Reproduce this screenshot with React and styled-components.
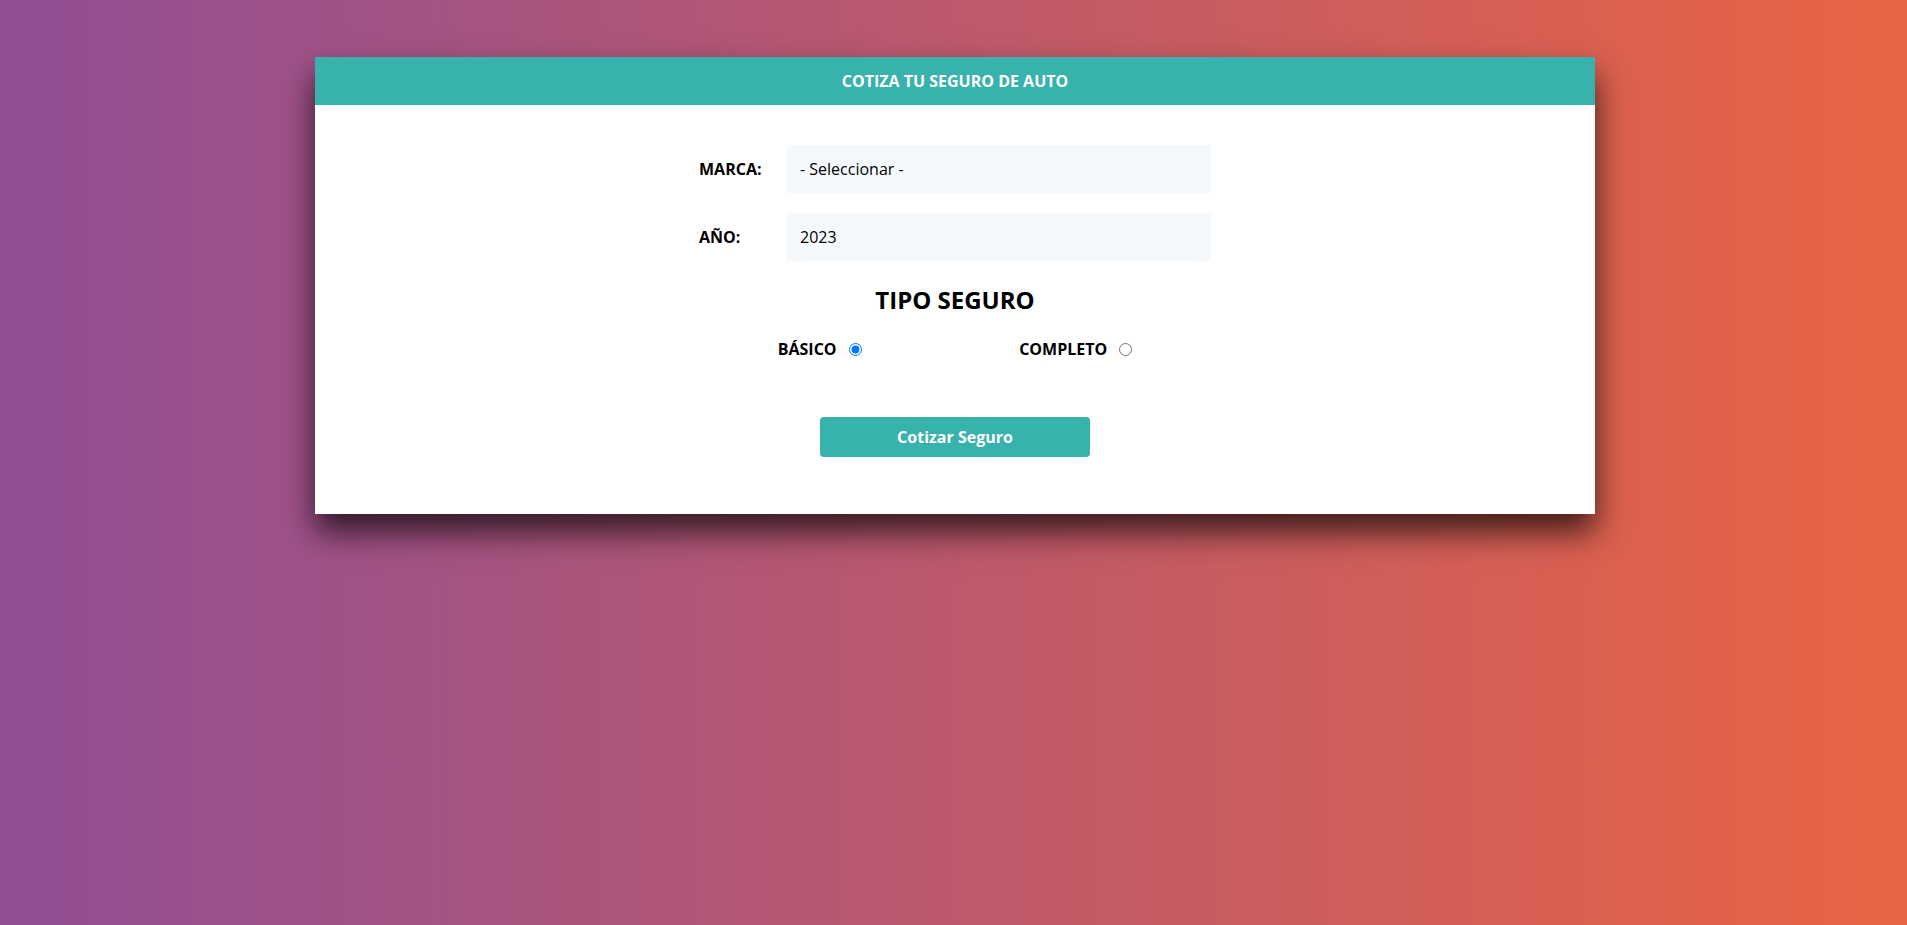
import React, { useState } from "react";
import styled, { createGlobalStyle } from "styled-components";

const GlobalStyle = createGlobalStyle`
  html, body {
    margin: 0;
    padding: 0;
    height: 100%;
  }
  body {
    font-family: "Open Sans", "Noto Sans", sans-serif;
    background: linear-gradient(to right, #904e95, #e96443);
    min-height: 925px;
  }
  * { box-sizing: border-box; }
`;

const Page = styled.div`
  min-height: 925px;
  padding: 57px 0 0 3px;
`;

const Card = styled.div`
  width: 1280px;
  margin: 0 auto;
  background: #ffffff;
  box-shadow: 0 18px 30px rgba(0, 0, 0, 0.7);
`;

const Header = styled.header`
  height: 48px;
  background: #38b2ac;
  color: #ffffff;
  display: flex;
  align-items: center;
  justify-content: center;
  font-size: 16px;
  font-weight: 700;
`;

const Body = styled.form`
  width: 512px;
  margin: 0 auto;
  padding: 40px 0 57px;
  display: flex;
  flex-direction: column;
`;

const Fields = styled.div`
  display: flex;
  flex-direction: column;
  gap: 20px;
`;

const Field = styled.div`
  display: flex;
  align-items: center;
  height: 48px;
`;

const Label = styled.label`
  flex: 0 0 88px;
  font-size: 16px;
  font-weight: 700;
  color: #000;
`;

const Select = styled.select`
  flex: 1;
  height: 48px;
  border: none;
  outline: none;
  appearance: none;
  -webkit-appearance: none;
  background: #f5f9fc;
  padding: 0 13px;
  font-family: inherit;
  font-size: 16px;
  color: #000;
`;

const Title = styled.h2`
  margin: 23px 0 0;
  text-align: center;
  font-size: 24px;
  line-height: 32px;
  font-weight: 700;
  color: #000;
`;

const RadioRow = styled.div`
  margin-top: 21px;
  display: flex;
  justify-content: space-around;
  align-items: center;
  height: 24px;
`;

const RadioOption = styled.label`
  display: flex;
  align-items: center;
  gap: 12px;
  font-size: 16px;
  line-height: 24px;
  font-weight: 700;
  color: #000;
`;

const Radio = styled.input`
  margin: 0;
  width: 13px;
  height: 13px;
`;

const Button = styled.button`
  align-self: center;
  margin-top: 56px;
  width: 270px;
  height: 40px;
  border: none;
  border-radius: 4px;
  background: #38b2ac;
  color: #ffffff;
  font-family: inherit;
  font-size: 16px;
  font-weight: 700;
  cursor: pointer;
`;

export default function App() {
  const [plan, setPlan] = useState("basico");
  return (
    <>
      <GlobalStyle />
      <Page>
        <Card>
          <Header>COTIZA TU SEGURO DE AUTO</Header>
          <Body onSubmit={(e) => e.preventDefault()}>
            <Fields>
              <Field>
                <Label>MARCA:</Label>
                <Select defaultValue="">
                  <option value="">- Seleccionar -</option>
                  <option value="1">Americano</option>
                  <option value="2">Europeo</option>
                  <option value="3">Asiático</option>
                </Select>
              </Field>
              <Field>
                <Label>AÑO:</Label>
                <Select defaultValue="2023">
                  <option value="2023">2023</option>
                  <option value="2022">2022</option>
                  <option value="2021">2021</option>
                </Select>
              </Field>
            </Fields>
            <Title>TIPO SEGURO</Title>
            <RadioRow>
              <RadioOption>
                BÁSICO
                <Radio
                  type="radio"
                  name="plan"
                  checked={plan === "basico"}
                  onChange={() => setPlan("basico")}
                />
              </RadioOption>
              <RadioOption>
                COMPLETO
                <Radio
                  type="radio"
                  name="plan"
                  checked={plan === "completo"}
                  onChange={() => setPlan("completo")}
                />
              </RadioOption>
            </RadioRow>
            <Button type="submit">Cotizar Seguro</Button>
          </Body>
        </Card>
      </Page>
    </>
  );
}
